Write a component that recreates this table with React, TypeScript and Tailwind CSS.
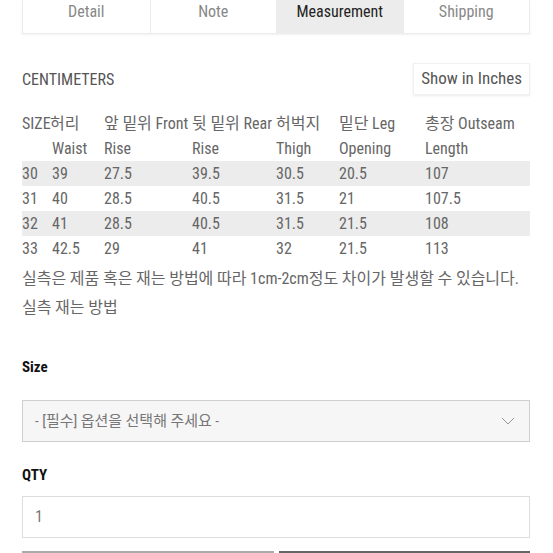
const font = "font-['Roboto_Condensed','Liberation_Sans_Narrow',Roboto,'Noto_Sans_CJK_KR',sans-serif]"

const tabs = ['Detail', 'Note', 'Measurement', 'Shipping']

const rows = [
  ['30', '39', '27.5', '39.5', '30.5', '20.5', '107'],
  ['31', '40', '28.5', '40.5', '31.5', '21', '107.5'],
  ['32', '41', '28.5', '40.5', '31.5', '21.5', '108'],
  ['33', '42.5', '29', '41', '32', '21.5', '113'],
]

const cols = 'grid grid-cols-[30px_52px_88px_84px_63px_86px_1fr]'

export default function App() {
  return (
    <div className={`${font} bg-white w-[553px] h-[553px] overflow-hidden px-[22px] pr-[23px]`}>
      <div className="grid grid-cols-4 h-[34px] border border-t-0 border-[#ececec] shadow-[0_1px_2px_rgba(0,0,0,0.06)]">
        {tabs.map((t, i) => (
          <div
            key={t}
            className={`flex justify-center pt-[2px] text-[16px] leading-[20px] ${
              i > 0 ? 'border-l border-[#ececec]' : ''
            } ${t === 'Measurement' ? 'bg-[#ececec] text-[#222]' : 'text-[#888]'}`}
          >
            {t}
          </div>
        ))}
      </div>

      <div className="flex items-center justify-between mt-[29px]">
        <span className="text-[16px] text-[#555] mt-[2px]">CENTIMETERS</span>
        <span className="border border-[#f0f0f0] shadow-[0_1px_2px_rgba(0,0,0,0.08)] px-[7px] h-[32px] flex items-center text-[17px] text-[#555]">
          Show in Inches
        </span>
      </div>

      <div className="mt-[16px] text-[16px] text-[#666] leading-[25px]">
        <div className={cols}>
          <span>SIZE</span>
          <span className="-ml-[2px]">허리</span>
          <span>앞 밑위 Front</span>
          <span>뒷 밑위 Rear</span>
          <span>허벅지</span>
          <span>밑단 Leg</span>
          <span>총장 Outseam</span>
        </div>
        <div className={cols}>
          <span></span>
          <span>Waist</span>
          <span>Rise</span>
          <span>Rise</span>
          <span>Thigh</span>
          <span>Opening</span>
          <span>Length</span>
        </div>
        {rows.map((r, i) => (
          <div key={r[0]} className={`${cols} ${i % 2 === 0 ? 'bg-[#ececec]' : ''}`}>
            {r.map((c, j) => (
              <span key={j}>{c}</span>
            ))}
          </div>
        ))}
      </div>

      <p className="mt-[3px] text-[16px] leading-[29px] text-[#666] whitespace-nowrap">
        실측은 제품 혹은 재는 방법에 따라 1cm-2cm정도 차이가 발생할 수 있습니다.
      </p>
      <p className="text-[16px] leading-[29px] text-[#666]">실측 재는 방법</p>

      <div className="mt-[35px] text-[15px] font-bold text-[#111] leading-[20px]">Size</div>
      <div className="mt-[23px] h-[42px] bg-[#f6f6f6] border border-[#cfcfcf] flex items-center justify-between pl-[12px] pr-[14px]">
        <span className="text-[15px] text-[#777]">- [필수] 옵션을 선택해 주세요 -</span>
        <svg width="14" height="8" viewBox="0 0 14 8" fill="none">
          <polyline points="1,1 7,7 13,1" stroke="#999" strokeWidth="1" />
        </svg>
      </div>

      <div className="mt-[23px] text-[15px] font-bold text-[#111] leading-[20px]">QTY</div>
      <div className="mt-[11px] h-[42px] bg-white border border-[#dcdcdc] flex items-center pl-[12px]">
        <span className="text-[16px] text-[#777]">1</span>
      </div>

      <div className="mt-[13px] grid grid-cols-2 gap-[5px]">
        <div className="h-[50px] border-t-2 border-[#aaa]" />
        <div className="h-[50px] border-t-2 border-[#666]" />
      </div>
    </div>
  )
}
